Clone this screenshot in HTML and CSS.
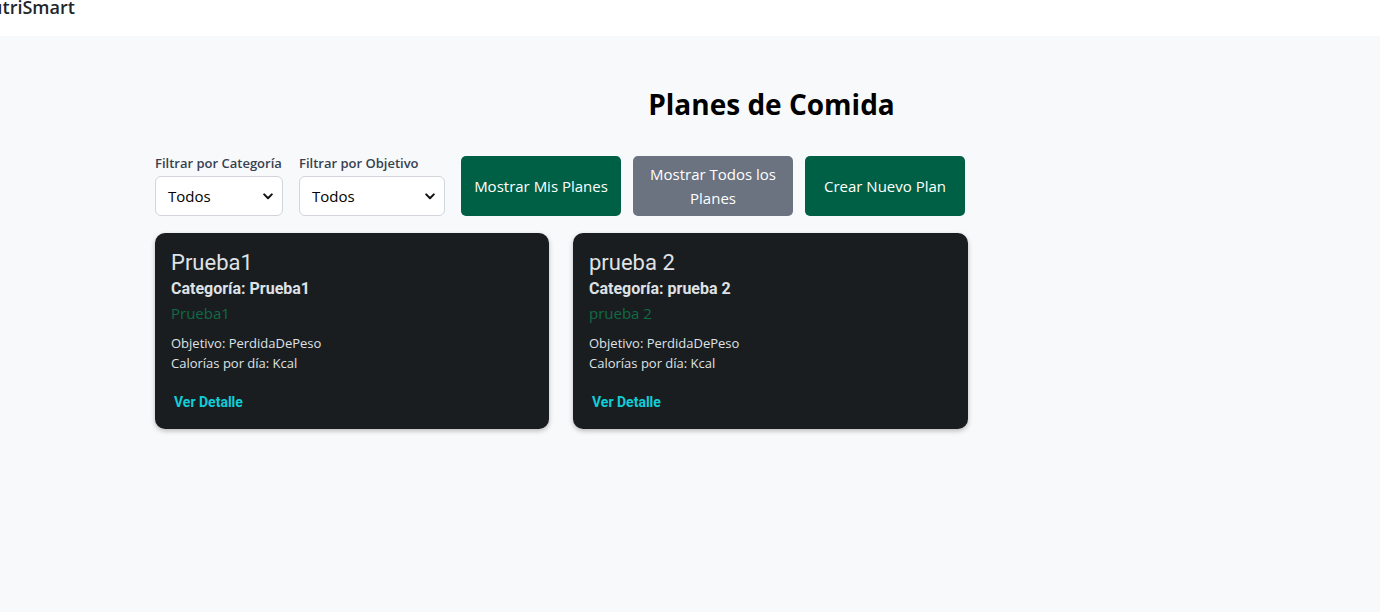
FILE: index.html
```html
<!DOCTYPE html>
<html lang="es">
<head>
<meta charset="utf-8">
<title>Planes de Comida</title>
<link rel="stylesheet" href="styles.css">
</head>
<body>
<header class="navbar">
  <span class="brand">NutriSmart</span>
</header>
<main class="page">
  <h1 class="title">Planes de Comida</h1>
  <div class="toolbar">
    <div class="filter">
      <label class="filter-label" for="cat">Filtrar por Categoría</label>
      <div class="select select-cat">
        <span>Todos</span>
        <svg class="chev" width="10" height="7" viewBox="0 0 10 7"><path d="M1.2 1.4 5 5.2 8.8 1.4" fill="none" stroke="#111" stroke-width="2" stroke-linecap="round" stroke-linejoin="round"/></svg>
      </div>
    </div>
    <div class="filter">
      <label class="filter-label" for="obj">Filtrar por Objetivo</label>
      <div class="select select-obj">
        <span>Todos</span>
        <svg class="chev" width="10" height="7" viewBox="0 0 10 7"><path d="M1.2 1.4 5 5.2 8.8 1.4" fill="none" stroke="#111" stroke-width="2" stroke-linecap="round" stroke-linejoin="round"/></svg>
      </div>
    </div>
    <div class="buttons">
      <button class="btn btn-green">Mostrar Mis Planes</button>
      <button class="btn btn-gray">Mostrar Todos los Planes</button>
      <button class="btn btn-green">Crear Nuevo Plan</button>
    </div>
  </div>
  <div class="cards">
    <article class="card">
      <h2 class="card-title">Prueba1</h2>
      <h3 class="card-cat">Categoría: Prueba1</h3>
      <p class="card-desc">Prueba1</p>
      <p class="card-meta">Objetivo: PerdidaDePeso</p>
      <p class="card-meta">Calorías por día: Kcal</p>
      <a class="card-link">Ver Detalle</a>
    </article>
    <article class="card">
      <h2 class="card-title">prueba 2</h2>
      <h3 class="card-cat">Categoría: prueba 2</h3>
      <p class="card-desc">prueba 2</p>
      <p class="card-meta">Objetivo: PerdidaDePeso</p>
      <p class="card-meta">Calorías por día: Kcal</p>
      <a class="card-link">Ver Detalle</a>
    </article>
  </div>
</main>
</body>
</html>
```
FILE: styles.css
```css
* { box-sizing: border-box; }
html, body { margin: 0; padding: 0; }
body {
  background: #f8f9fa;
  font-family: "Open Sans", "Noto Sans", sans-serif;
  color: #212529;
  width: 1380px;
  height: 612px;
  overflow: hidden;
}
.navbar {
  height: 36px;
  background: #ffffff;
  display: flex;
  align-items: flex-start;
  overflow: hidden;
}
.brand {
  font-family: "Open Sans", sans-serif;
  font-weight: 600;
  font-size: 18px;
  line-height: 18px;
  margin-left: -23px;
  margin-top: -2px;
  color: #212529;
}
.page {
  padding: 0 0 0 155px;
}
.title {
  margin: 50px 0 0 8px;
  text-align: center;
  font-family: "Open Sans", sans-serif;
  font-weight: 700;
  font-size: 28px;
  line-height: 36px;
  color: #000;
}
.toolbar {
  display: flex;
  align-items: flex-end;
  margin-top: 32px;
  gap: 16px;
}
.filter {
  display: flex;
  flex-direction: column;
}
.filter-label {
  font-size: 13px;
  font-weight: 600;
  color: #374151;
  line-height: 18px;
  margin-bottom: 4px;
}
.select {
  height: 40px;
  border: 1px solid #d1d5db;
  border-radius: 6px;
  background: #fff;
  display: flex;
  align-items: center;
  justify-content: space-between;
  padding: 0 9px 0 12px;
  font-size: 15px;
  color: #000;
}
.select-cat { width: 128px; }
.select-obj { width: 146px; }
.buttons {
  display: flex;
  gap: 12px;
}
.btn {
  width: 160px;
  height: 60px;
  border: none;
  border-radius: 5px;
  color: #fff;
  font-family: "Open Sans", sans-serif;
  font-size: 15px;
  line-height: 24px;
  padding: 0 12px;
}
.btn-green { background: #006045; }
.btn-gray { background: #6b7280; }
.cards {
  display: flex;
  gap: 24px;
  margin-top: 17px;
}
.card {
  width: 394px;
  height: 196px;
  background: #1a1d20;
  border-radius: 10px;
  box-shadow: 0 2px 5px rgba(0,0,0,0.25);
  padding: 16px 16px;
  color: #dee2e6;
}
.card + .card { width: 395px; }
.card-title {
  margin: 0;
  font-family: Roboto, sans-serif;
  font-weight: 400;
  font-size: 22px;
  line-height: 28px;
}
.card-cat {
  margin: 0;
  font-family: Roboto, sans-serif;
  font-weight: 700;
  font-size: 16px;
  line-height: 24px;
}
.card-desc {
  margin: 1px 0 9px;
  font-size: 15px;
  line-height: 22px;
  color: #0f6b44;
}
.card-meta {
  margin: 0;
  font-size: 13px;
  line-height: 20px;
}
.card-link {
  display: inline-block;
  margin: 21px 0 0 3px;
  font-family: Roboto, sans-serif;
  font-weight: 700;
  font-size: 14px;
  color: #10cdd8;
}
```
